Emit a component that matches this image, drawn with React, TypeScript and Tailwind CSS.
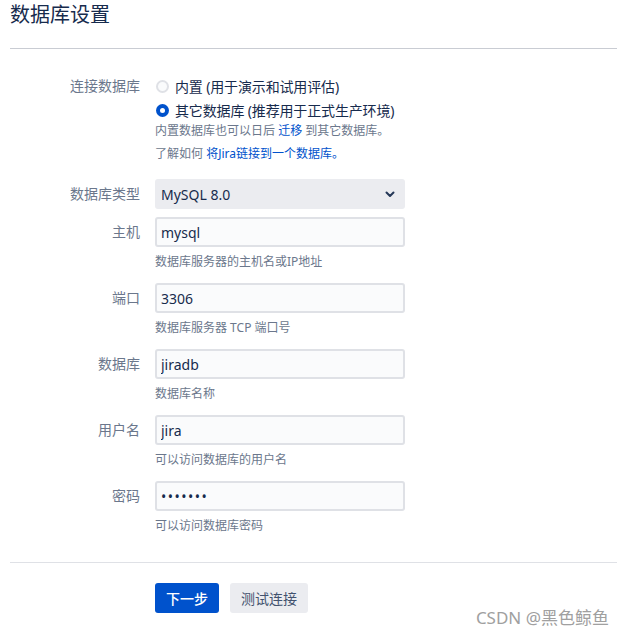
import { useState } from "react";

type Field = {
  label: string;
  value: string;
  help: string;
  dots?: boolean;
};

const fields: Field[] = [
  { label: "主机", value: "mysql", help: "数据库服务器的主机名或IP地址" },
  { label: "端口", value: "3306", help: "数据库服务器 TCP 端口号" },
  { label: "数据库", value: "jiradb", help: "数据库名称" },
  { label: "用户名", value: "jira", help: "可以访问数据库的用户名" },
  { label: "密码", value: "•••••••", help: "可以访问数据库密码", dots: true },
];

function Radio({ checked }: { checked: boolean }) {
  if (checked) {
    return (
      <span className="flex h-[13px] w-[13px] shrink-0 items-center justify-center rounded-full bg-[#0052cc]">
        <span className="h-[5px] w-[5px] rounded-full bg-white" />
      </span>
    );
  }
  return <span className="h-[13px] w-[13px] shrink-0 rounded-full border-2 border-[#dfe1e6] bg-[#fafbfc]" />;
}

export default function App() {
  const [mode, setMode] = useState<"builtin" | "external">("external");

  return (
    <div
      className="relative min-h-screen bg-white pl-[10px] text-[#172b4d]"
      style={{ fontFamily: '"Noto Sans", "Noto Sans CJK SC", sans-serif' }}
    >
      <h1 className="h-[30px] text-[20px] font-normal leading-[30px]">数据库设置</h1>
      <div className="mt-[18px] border-t border-[#c9ccd3]" />

      <div className="flex flex-col pt-[25px] text-[14px]">
        {/* 连接数据库 */}
        <div className="flex items-start gap-[15px]">
          <div className="w-[130px] text-right leading-[24px] text-[#6b778c]">连接数据库</div>
          <div className="flex flex-col">
            <button
              className="flex h-[24px] items-center gap-[6px] pl-[1px] text-left"
              onClick={() => setMode("builtin")}
            >
              <Radio checked={mode === "builtin"} />
              <span className="tracking-[-0.15px]">内置 (用于演示和试用评估)</span>
            </button>
            <button
              className="flex h-[24px] items-center gap-[6px] pl-[1px] text-left"
              onClick={() => setMode("external")}
            >
              <Radio checked={mode === "external"} />
              <span className="tracking-[-0.15px]">其它数据库 (推荐用于正式生产环境)</span>
            </button>
            <p className="mt-[1px] text-[12px] leading-[16px] text-[#6b778c]">
              内置数据库也可以日后 <span className="text-[#0052cc]">迁移</span> 到其它数据库。
            </p>
            <p className="mt-[7px] text-[12px] leading-[16px] text-[#6b778c]">
              了解如何 <span className="text-[#0052cc]">将Jira链接到一个数据库。</span>
            </p>
          </div>
        </div>

        {/* 数据库类型 */}
        <div className="mt-[17px] flex items-start gap-[15px]">
          <div className="w-[130px] text-right leading-[30px] text-[#6b778c]">数据库类型</div>
          <div className="flex h-[30px] w-[250px] items-center justify-between rounded-[3px] bg-[#ebecf0] pl-[6px] pr-[10px]">
            <span>MySQL 8.0</span>
            <svg width="10" height="7" viewBox="0 0 10 7" fill="none">
              <path d="M1.5 1.5 5 5l3.5-3.5" stroke="#253858" strokeWidth="2" strokeLinecap="round" strokeLinejoin="round" />
            </svg>
          </div>
        </div>

        <div className="mt-[8px] flex flex-col">
          {fields.map((f, i) => (
            <div key={f.label} className={`flex items-start gap-[15px] ${i < fields.length - 1 ? "h-[66px]" : ""}`}>
              <div className="w-[130px] text-right leading-[30px] text-[#6b778c]">{f.label}</div>
              <div className="flex w-[250px] flex-col">
                <input
                  defaultValue={f.value}
                  className={`h-[30px] w-full rounded-[3px] border-2 border-[#dfe1e6] bg-[#fafbfc] px-[4px] text-[14px] text-[#172b4d] outline-none ${
                    f.dots ? "text-[10px] tracking-[1.5px]" : ""
                  }`}
                />
                <p className="mt-[5px] text-[12px] leading-[20px] text-[#6b778c]">{f.help}</p>
              </div>
            </div>
          ))}
        </div>
      </div>

      <div className="mt-[26px] border-t border-[#dfe1e6]" />

      <div className="mt-[20px] flex gap-[11px] pl-[145px] text-[14px]">
        <button className="h-[30px] rounded-[3px] bg-[#0052cc] px-[11px] font-medium text-white">下一步</button>
        <button className="h-[30px] rounded-[3px] bg-[#ebecf0] px-[11px] text-[#42526e]">测试连接</button>
      </div>

      <div className="absolute bottom-[6px] right-[8px] text-[17px] text-[#a0a0a0]">CSDN @黑色鲸鱼</div>
    </div>
  );
}
